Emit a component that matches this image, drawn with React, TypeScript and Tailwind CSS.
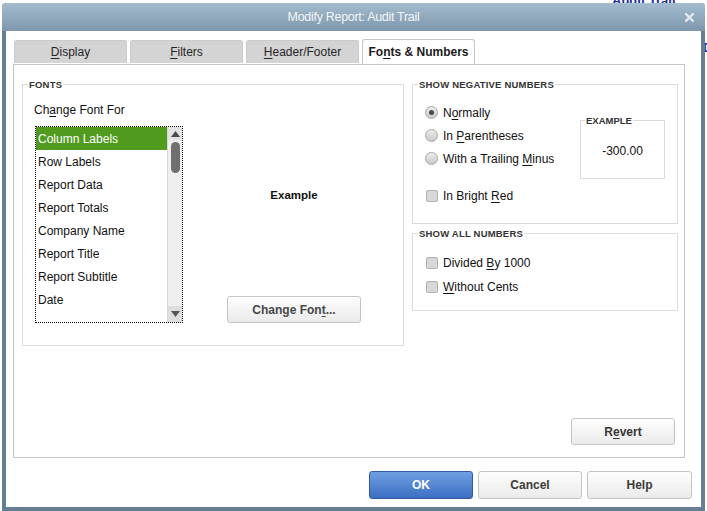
import type { ReactNode } from 'react'

const font = "font-['Liberation_Sans',Arial,sans-serif]"

// label with one underlined access key
function Key({ text, at }: { text: string; at: number }) {
  return (
    <span>
      {text.slice(0, at)}
      <span className="underline underline-offset-[2px]">{text[at]}</span>
      {text.slice(at + 1)}
    </span>
  )
}

function Tab({ children, active }: { children: ReactNode; active?: boolean }) {
  if (active) {
    return (
      <div className="relative z-10 -mt-px flex h-[25px] w-[113px] items-center justify-center rounded-t-[3px] border border-b-0 border-[#c6c6c6] bg-white text-[12px] font-bold text-[#1b1b1b]">
        {children}
      </div>
    )
  }
  return (
    <div className="flex h-[23px] w-[113px] items-center justify-center rounded-t-[3px] border border-b-0 border-[#cbcbcb] bg-[#d4d4d4] text-[12px] text-[#262626]">
      {children}
    </div>
  )
}

function Group({ title, className, children }: { title: string; className: string; children: ReactNode }) {
  return (
    <fieldset className={`border border-[#dcdcdc] ${className}`}>
      <legend className="ml-[5px] px-[1px] text-[9.5px] font-bold leading-[11px] tracking-[0.2px] text-[#333]">{title}</legend>
      {children}
    </fieldset>
  )
}

function Radio({ checked }: { checked?: boolean }) {
  return (
    <span className="flex size-[13px] items-center justify-center rounded-full border border-[#a8a8a8] bg-gradient-to-b from-[#ececec] to-[#c9c9c9]">
      {checked && <span className="size-[5px] rounded-full bg-[#4a4a4a]" />}
    </span>
  )
}

function Check() {
  return <span className="size-[12px] rounded-[2px] border border-[#b3b3b3] bg-[#d8d8d8]" />
}

function Button({ children, className }: { children: ReactNode; className: string }) {
  return (
    <button className={`flex items-center justify-center rounded-[3px] border border-[#c4c4c4] bg-gradient-to-b from-[#fefefe] to-[#ebebeb] text-[12px] font-bold text-[#3c3c3c] ${className}`}>
      {children}
    </button>
  )
}

const items = ['Column Labels', 'Row Labels', 'Report Data', 'Report Totals', 'Company Name', 'Report Title', 'Report Subtitle', 'Date']

export default function App() {
  return (
    <div className={`relative h-[511px] w-[707px] overflow-hidden bg-white ${font}`}>
      {/* report behind the dialog */}
      <span className="absolute left-[612px] top-[-9px] text-[13px] font-bold text-[#1c2c9c]">Audit Trail</span>
      <span className="absolute left-[703px] top-[38px] text-[13px] font-bold text-[#1c2c9c]">D</span>

      <div className="relative ml-[2px] mt-[3px] flex h-[508px] w-[703px] flex-col rounded-t-[4px] bg-[#657e93]">
        <div className="relative flex h-[28px] items-center justify-center rounded-t-[4px] bg-gradient-to-b from-[#a4bccf] to-[#7e97ac]">
          <span className="text-[12.5px] tracking-[-0.3px] text-[#f4f6f8]">Modify Report: Audit Trail</span>
          <svg className="absolute right-[11px] top-[10px]" width="9" height="9" viewBox="0 0 9 9">
            <path d="M1 1L8 8M8 1L1 8" stroke="#e3e8ed" strokeWidth="2.4" strokeLinecap="square" />
          </svg>
        </div>

        <div className="mx-[4px] mb-[4px] flex flex-1 flex-col bg-white pt-[9px]">
          <div className="ml-[8px] flex gap-[3px]">
            <Tab><Key text="Display" at={0} /></Tab>
            <Tab><Key text="Filters" at={0} /></Tab>
            <Tab><Key text="Header/Footer" at={0} /></Tab>
            <Tab active><Key text="Fonts & Numbers" at={2} /></Tab>
          </div>

          <div className="ml-[7px] flex h-[394px] w-[672px] flex-col border border-[#c6c6c6] bg-white">
            <div className="ml-[8px] mt-[14px] flex gap-[8px]">
              <Group title="FONTS" className="h-[267px] w-[382px]">
                <div className="pl-[11px]">
                  <div className="mt-[13px] text-[12px] leading-[14px] text-[#111]">
                    <Key text="Change Font For" at={2} />
                  </div>
                  <div className="mt-[9px] flex">
                    <div className="ml-[1px] flex h-[197px] w-[148px] border border-dotted border-black">
                      <div className="flex-1">
                        {items.map((it, i) => (
                          <div
                            key={it}
                            className={`flex h-[23px] items-center pl-[2px] text-[12px] ${i === 0 ? 'bg-[#519b1f] text-white' : 'text-[#111]'}`}
                          >
                            {it}
                          </div>
                        ))}
                      </div>
                      <div className="flex w-[15px] flex-col border-l border-[#d6d6d6] bg-[#efefef]">
                        <div className="flex h-[13px] items-center justify-center bg-[#e3e3e3]">
                          <svg width="9" height="6" viewBox="0 0 9 6"><path d="M4.5 0L9 6H0Z" fill="#4a4a4a" /></svg>
                        </div>
                        <div className="mx-auto mt-[2px] h-[31px] w-[9px] rounded-full bg-[#6f6f6f]" />
                        <div className="flex-1" />
                        <div className="flex h-[16px] items-center justify-center bg-[#dedede]">
                          <svg width="9" height="6" viewBox="0 0 9 6"><path d="M0 0H9L4.5 6Z" fill="#555" /></svg>
                        </div>
                      </div>
                    </div>
                    <div className="flex flex-1 flex-col items-center pl-[2px]">
                      <div className="mt-[62px] text-[11.5px] font-bold leading-[14px] text-[#111]">Example</div>
                      <Button className="mt-[94px] h-[27px] w-[134px] text-[#474747]">
                        <Key text="Change Font..." at={10} />
                      </Button>
                    </div>
                  </div>
                </div>
              </Group>

              <div className="flex w-[266px] flex-col gap-[4px]">
                <Group title="SHOW NEGATIVE NUMBERS" className="h-[145px]">
                  <div className="flex">
                    <div className="pl-[12px] pt-[11px] text-[12px] text-[#111]">
                      <div className="flex h-[23px] items-center gap-[5px]"><Radio checked /><Key text="Normally" at={1} /></div>
                      <div className="flex h-[23px] items-center gap-[5px]"><Radio /><Key text="In Parentheses" at={3} /></div>
                      <div className="flex h-[23px] items-center gap-[5px]"><Radio /><Key text="With a Trailing Minus" at={16} /></div>
                      <div className="mt-[14px] flex h-[23px] items-center gap-[5px] pl-px"><Check /><Key text="In Bright Red" at={10} /></div>
                    </div>
                    <fieldset className="ml-auto mr-[12px] mt-[25px] h-[64px] w-[85px] border border-[#dcdcdc]">
                      <legend className="ml-[4px] px-[1px] text-[9.5px] font-bold leading-[11px] text-[#333]">EXAMPLE</legend>
                      <div className="flex h-[50px] items-center justify-center text-[12px] text-[#111]">-300.00</div>
                    </fieldset>
                  </div>
                </Group>
                <Group title="SHOW ALL NUMBERS" className="h-[83px]">
                  <div className="pl-[13px] pt-[12px] text-[12px] text-[#111]">
                    <div className="flex h-[24px] items-center gap-[5px]"><Check /><Key text="Divided By 1000" at={8} /></div>
                    <div className="flex h-[24px] items-center gap-[5px]"><Check /><Key text="Without Cents" at={0} /></div>
                  </div>
                </Group>
              </div>
            </div>

            <Button className="mb-[12px] mr-[9px] mt-auto h-[27px] w-[104px] self-end text-[#363636]">
              <Key text="Revert" at={1} />
            </Button>
          </div>

          <div className="mt-[13px] flex justify-end gap-[5px] pr-[9px]">
            <button className="flex h-[28px] w-[104px] items-center justify-center rounded-[3px] border border-[#2f5ba8] bg-gradient-to-b from-[#6f9fe2] to-[#3c6ec4] text-[12px] font-bold text-white">
              OK
            </button>
            <Button className="h-[28px] w-[104px]">Cancel</Button>
            <Button className="h-[28px] w-[105px]">Help</Button>
          </div>
        </div>
      </div>
    </div>
  )
}
